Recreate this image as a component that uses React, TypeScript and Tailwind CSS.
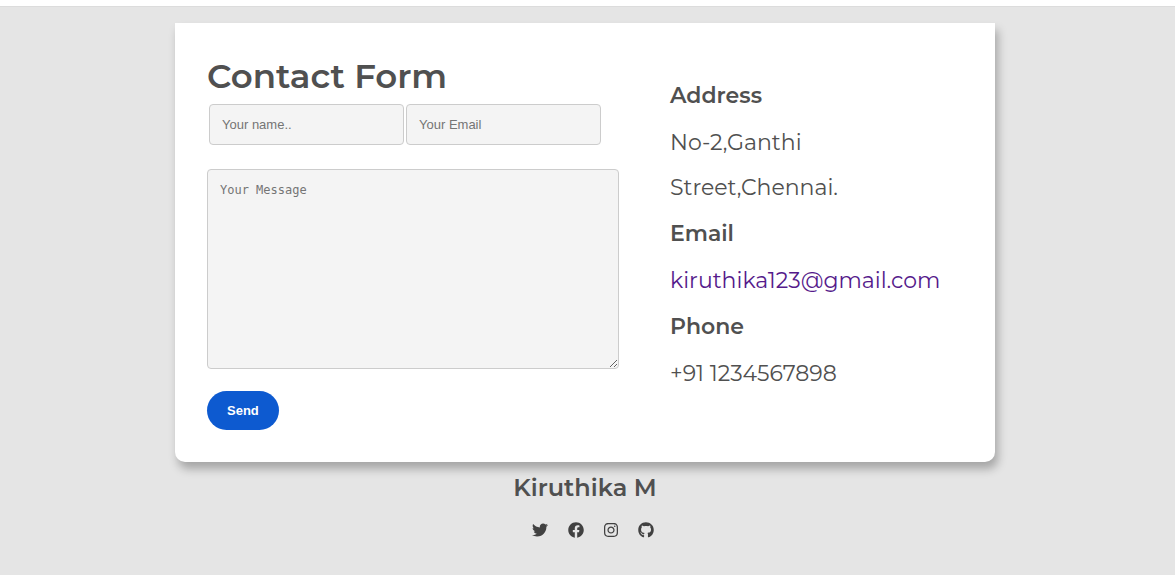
import { FaFacebook, FaGithub, FaInstagram, FaTwitter } from "react-icons/fa";

const socials = [
  { name: "Twitter", href: "#twitter", Icon: FaTwitter, width: "w-4" },
  { name: "Facebook", href: "#facebook", Icon: FaFacebook, width: "w-4" },
  { name: "Instagram", href: "#instagram", Icon: FaInstagram, width: "w-3.5" },
  { name: "GitHub", href: "#github", Icon: FaGithub, width: "w-4" },
];

const fieldClass =
  "rounded border border-[#cccccc] bg-[#f4f4f4] px-3 text-[#333333] placeholder:text-[#757575] placeholder:opacity-100";

const inputClass = `${fieldClass} h-[41px] w-[195px] min-w-0 font-['Liberation_Sans',Arial,sans-serif] text-[13px]`;

const detailHeadingClass = "text-[22px] leading-[48px] font-semibold";

function ContactForm() {
  return (
    <form className="w-full max-w-[412px]" onSubmit={(e) => e.preventDefault()}>
      <h1 className="text-[34px] leading-[42px] font-semibold">Contact Form</h1>
      <div className="mt-[7px] flex gap-0.5 px-0.5">
        <input type="text" aria-label="Your name" placeholder="Your name.." className={inputClass} />
        <input type="email" aria-label="Your Email" placeholder="Your Email" className={inputClass} />
      </div>
      <textarea
        aria-label="Your Message"
        placeholder="Your Message"
        className={`${fieldClass} mt-6 block h-[200px] w-full resize py-3 font-['DejaVu_Sans_Mono',monospace] text-xs leading-4`}
      />
      <button
        type="submit"
        className="mt-[22px] block rounded-[20px] bg-[#0d5ad0] px-5 py-3 font-['Liberation_Sans',Arial,sans-serif] text-[13px] leading-[15px] font-bold text-white"
      >
        Send
      </button>
    </form>
  );
}

function ContactDetails() {
  return (
    <address className="pt-[17px] text-[22px] leading-[45px] font-normal not-italic">
      <h2 className={detailHeadingClass}>Address</h2>
      <p>
        No-2,Ganthi
        <br />
        Street,Chennai.
      </p>
      <h2 className={detailHeadingClass}>Email</h2>
      <p>
        <a href="mailto:kiruthika123@gmail.com" className="text-[#551a8b]">
          kiruthika123@gmail.com
        </a>
      </p>
      <h2 className={detailHeadingClass}>Phone</h2>
      <p>+91 1234567898</p>
    </address>
  );
}

export default function App() {
  return (
    <div className="flex min-h-screen flex-col bg-white pt-1.5 font-[Montserrat,Inter,sans-serif] text-[#505050]">
      <main className="flex-1 border-t border-[#dcdcdc] bg-[#e5e5e5] pt-4 pr-[5px] pb-6">
        <section className="mx-auto flex max-w-[820px] flex-wrap gap-x-[51px] rounded-b-[10px] bg-white p-8 shadow-[3px_7px_10px_rgba(0,0,0,0.28)]">
          <ContactForm />
          <ContactDetails />
        </section>
        <footer className="flex flex-col items-center pt-2">
          <h2 className="text-2xl leading-9 font-semibold">Kiruthika M</h2>
          <nav aria-label="Social links" className="mt-4 flex gap-5 pl-4 text-[#414141]">
            {socials.map(({ name, href, Icon, width }) => (
              <a key={name} href={href} aria-label={name}>
                <Icon className={`h-4 ${width}`} />
              </a>
            ))}
          </nav>
        </footer>
      </main>
    </div>
  );
}
